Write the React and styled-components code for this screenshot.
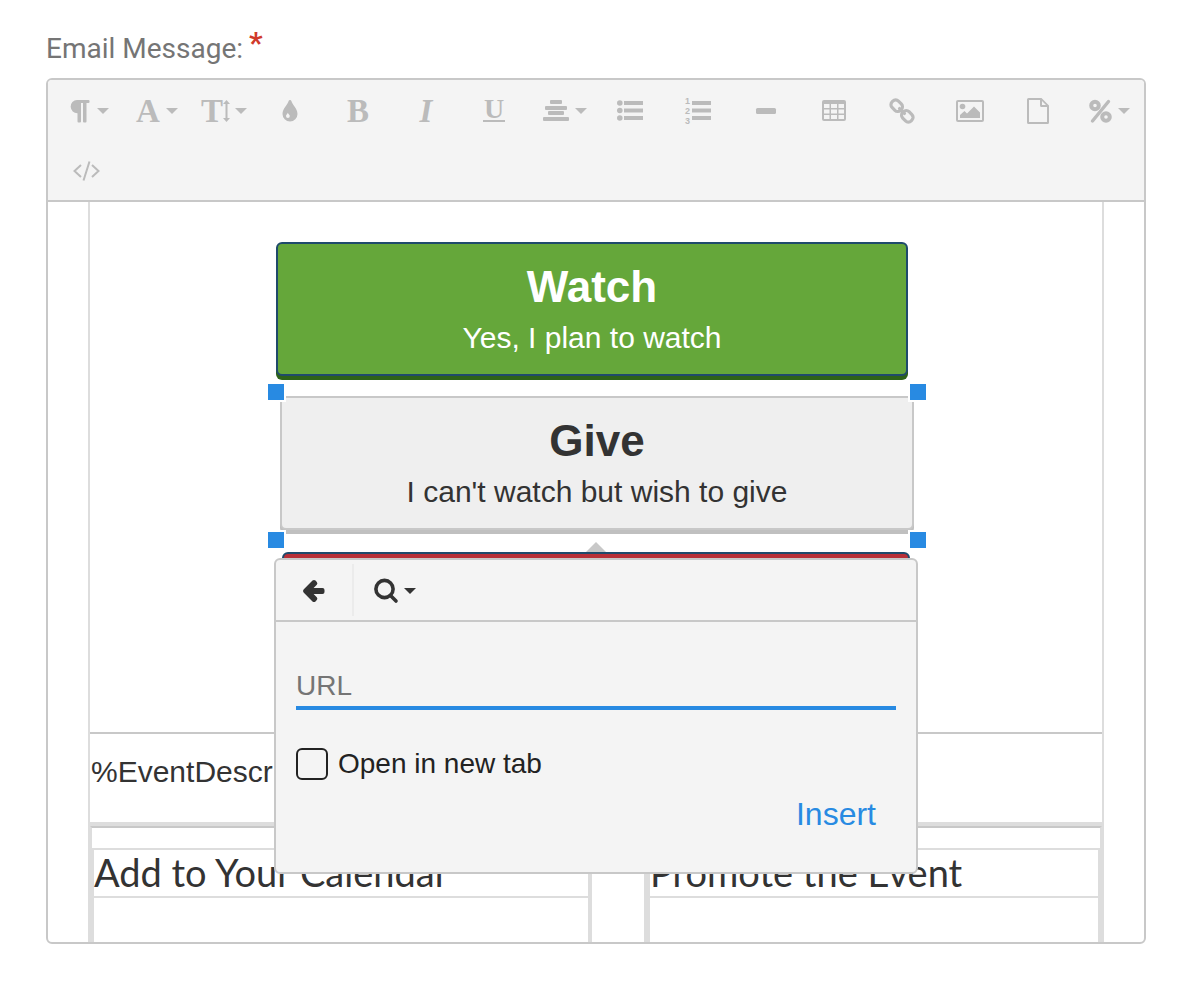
import React from "react";
import styled, { createGlobalStyle } from "styled-components";

const GlobalStyle = createGlobalStyle`
  *, *::before, *::after { box-sizing: border-box; }
  body {
    margin: 0;
    background: #fff;
    color: #333;
    font-family: "Liberation Sans", Arial, sans-serif;
  }
`;

const Field = styled.main`
  padding: 29px 40px 38px 46px;
`;

const FieldLabel = styled.h1`
  display: flex;
  gap: 6px;
  margin: 0 0 9px;
  font: 400 28px/40px Roboto, sans-serif;
  color: #757575;
`;

const Required = styled.span`
  color: #d03a2b;
  font-size: 30px;
  font-weight: 700;
  line-height: 28px;
`;

const Editor = styled.section`
  border: 2px solid #c8c8c8;
  border-radius: 6px;
  overflow: hidden;
`;

const Toolbar = styled.div`
  display: flex;
  flex-wrap: wrap;
  padding-left: 4px;
  background: #f4f4f4;
  border-bottom: 2px solid #c8c8c8;
`;

const ToolButton = styled.button`
  display: flex;
  align-items: center;
  justify-content: center;
  gap: 6px;
  width: ${(p) => p.$width || 68}px;
  height: 60px;
  padding: 2px 0 0 ${(p) => (p.$menu ? 6 : 0)}px;
  border: 0;
  background: none;
  color: ${(p) => (p.$active ? "#333" : "#bbb")};
`;

const Caret = styled.span`
  border: 6px solid transparent;
  border-top-color: currentColor;
  border-bottom: 0;
`;

const Icon = styled.svg`
  display: block;
  flex: none;
  fill: currentColor;
  overflow: visible;
`;

const Body = styled.div`
  position: relative;
  height: 740px;
  padding: 0 40px;
  overflow: hidden;
`;

const Message = styled.div`
  border: solid #ddd;
  border-width: 0 2px;
`;

const ActionCell = styled.div`
  height: 530px;
  padding-top: 40px;
`;

const ActionStack = styled.div`
  width: 640px;
  max-width: 100%;
  margin: 0 auto;
`;

const tones = {
  watch: { bg: "#65a73a", line: "#1f4a6b", edge: "#2d6218", text: "#fff", space: "0 8px 20px 0" },
  give: { bg: "#efefef", line: "#c8c8c8", edge: "#c0c0c0", text: "#333", space: "0 2px 22px 4px" },
  decline: { bg: "#b73038", line: "#1f4a6b", edge: "#7c1d23", text: "#fff", space: "0 6px" },
};

const Action = styled.a`
  position: relative;
  display: flex;
  flex-direction: column;
  justify-content: center;
  gap: 8px;
  height: 134px;
  margin: ${(p) => tones[p.$tone].space};
  border: 2px solid ${(p) => tones[p.$tone].line};
  border-radius: 6px;
  background: ${(p) => tones[p.$tone].bg};
  box-shadow: 0 4px 0 ${(p) => tones[p.$tone].edge};
  color: ${(p) => tones[p.$tone].text};
  text-align: center;
  text-decoration: none;
  font-size: 30px;
  line-height: 36px;
`;

const ActionTitle = styled.strong`
  font-size: 44px;
  line-height: 50px;
`;

const Handle = styled.i`
  position: absolute;
  ${(p) => p.$v}: ${(p) => (p.$v === "top" ? -16 : -22)}px;
  ${(p) => p.$h}: -16px;
  width: 20px;
  height: 20px;
  border: 2px solid #fff;
  background: #288ae2;
`;

const Description = styled.div`
  height: 90px;
  padding: 20px 0 0 1px;
  border-top: 2px solid #c8c8c8;
  font-size: 30px;
  line-height: 36px;
`;

const Details = styled.div`
  margin-top: 4px;
  padding-top: 20px;
  border: 2px solid #ddd;
  border-top-color: #c8c8c8;
  box-shadow: 0 -4px 0 #ddd;
`;

const Columns = styled.div`
  display: grid;
  grid-template-columns: 500fr 456fr;
  column-gap: 52px;
`;

const Column = styled.section`
  height: 140px;
  border: solid #ddd;
  border-width: 2px ${(p) => (p.$last ? 2 : 4)}px 2px ${(p) => (p.$last ? 6 : 2)}px;
`;

const ColumnTitle = styled.h2`
  height: 48px;
  margin: 0;
  border-bottom: 2px solid #ddd;
  font: 400 38px/44px Lato, sans-serif;
`;

const Popup = styled.form`
  position: absolute;
  top: 356px;
  left: 50%;
  width: 644px;
  margin-left: -322px;
  border: 2px solid #c8c8c8;
  border-radius: 6px;
  background: #f4f4f4;
  color: #222;
  font-size: 28px;

  &::before {
    content: "";
    position: absolute;
    top: -18px;
    left: 50%;
    margin-left: -10px;
    border: 10px solid transparent;
    border-top: 0;
    border-bottom-color: #c8c8c8;
  }
`;

const PopupBar = styled.div`
  display: flex;
  align-items: center;
  border-bottom: 2px solid #c8c8c8;
`;

const Divider = styled.span`
  width: 2px;
  height: 52px;
  background: #ebebeb;
`;

const PopupContent = styled.div`
  display: flex;
  flex-direction: column;
  padding: 40px 20px 38px;
`;

const UrlInput = styled.input`
  width: 100%;
  height: 48px;
  padding: 4px 0 0;
  border: 0;
  border-bottom: 4px solid #288ae2;
  border-radius: 0;
  background: transparent;
  font: inherit;
  outline: 0;

  &::placeholder { color: #757575; opacity: 1; }
`;

const CheckRow = styled.label`
  display: flex;
  align-items: center;
  gap: 10px;
  margin-top: 38px;
  line-height: 32px;
`;

const Checkbox = styled.input`
  appearance: none;
  width: 32px;
  height: 32px;
  margin: 0;
  border: 2px solid #222;
  border-radius: 6px;
`;

const InsertButton = styled.button`
  align-self: flex-end;
  margin-top: 14px;
  padding: 0 20px;
  border: 0;
  background: none;
  color: #288ae2;
  font: 32px/40px "Liberation Sans", Arial, sans-serif;
`;

const Glyph = styled.text`
  font: ${(p) => p.$font};
  text-anchor: middle;
`;

const Stroke = styled.g`
  fill: none;
  stroke: currentColor;
`;

const serif = '"Liberation Serif", serif';

const icons = {
  paragraph: (
    <Icon width="21" height="24">
      <path d="M7 1H18.5Q19.5 1 19.5 2V3Q19.5 4 18.5 4H16.5V22.5Q16.5 23.5 15.5 23.5H14Q13 23.5 13 22.5V4H11V22.5Q11 23.5 10 23.5H8.5Q7.5 23.5 7.5 22.5V14.2A6.6 6.6 0 0 1 7 1Z" />
    </Icon>
  ),
  family: <Icon width="24" height="24"><Glyph x="12" y="23" $font={`bold 33px ${serif}`}>A</Glyph></Icon>,
  size: (
    <Icon width="26" height="24">
      <Glyph x="9" y="23" $font={`bold 33px ${serif}`}>T</Glyph>
      <path d="M23.500 1L27 5H24.500V19H27L23.500 23L20 19H22.500V5H20Z" />
    </Icon>
  ),
  color: (
    <Icon width="16" height="22">
      <path fillRule="evenodd" d="M8 0C8.7 0 9.2 .4 9.4 1C10.5 5 15.5 8.500 15.500 14A7.500 7.500 0 0 1 .5 14C.5 8.500 5.500 5 6.600 1C6.800 .4 7.300 0 8 0ZM5.800 12.700C5.300 14 4 14.800 4 16.100A1.900 1.900 0 0 0 7.800 16.100C7.800 14.800 6.400 14 5.800 12.700Z" />
    </Icon>
  ),
  bold: <Icon width="22" height="24"><Glyph x="11" y="23" $font={`bold 33px ${serif}`}>B</Glyph></Icon>,
  italic: <Icon width="18" height="24"><Glyph x="9" y="23" $font={`italic bold 33px ${serif}`}>I</Glyph></Icon>,
  underline: (
    <Icon width="22" height="24">
      <Glyph x="11" y="19" $font={`bold 28px ${serif}`}>U</Glyph>
      <path d="M0 21h22v2H0Z" />
    </Icon>
  ),
  align: (
    <Icon width="26" height="22">
      <rect x="7" y="0" width="12" height="4" rx="1" />
      <rect x="2" y="6" width="22" height="4" rx="1" />
      <rect x="5" y="11" width="16" height="4" rx="1" />
      <rect x="0" y="17" width="26" height="4" rx="1" />
    </Icon>
  ),
  bullets: (
    <Icon width="26" height="22">
      {[3, 10.5, 18].map((y) => (
        <g key={y}>
          <circle cx="2.8" cy={y} r="2.8" />
          <rect x="7" y={y - 2} width="19" height="4" />
        </g>
      ))}
    </Icon>
  ),
  numbers: (
    <Icon width="26" height="22">
      {[3, 10.5, 18].map((y, i) => (
        <g key={y}>
          <Glyph x="2.5" y={4 + i * 10} $font='bold 9px "Liberation Sans", sans-serif'>{i + 1}</Glyph>
          <rect x="7" y={y - 2} width="19" height="4" />
        </g>
      ))}
    </Icon>
  ),
  rule: <Icon width="20" height="6"><rect width="20" height="6" rx="1.5" /></Icon>,
  table: (
    <Icon width="24" height="22">
      <path fillRule="evenodd" d="M2 0H22Q24 0 24 2V19Q24 21 22 21H2Q0 21 0 19V2Q0 0 2 0ZM2 4V8H7.500V4ZM9 4V8H15V4ZM16.500 4V8H22V4ZM2 9.500V13.500H7.500V9.500ZM9 9.500V13.500H15V9.500ZM16.500 9.500V13.500H22V9.500ZM2 15V19H7.500V15ZM9 15V19H15V15ZM16.500 15V19H22V15Z" />
    </Icon>
  ),
  link: (
    <Icon width="24" height="24">
      <Stroke transform="rotate(45 12 12)" strokeWidth="3.2" strokeLinecap="round">
        <rect x="-1.5" y="7.500" width="12" height="9" rx="4" />
        <rect x="13.500" y="7.500" width="12" height="9" rx="4" />
        <path d="M8.500 12H15.500" />
      </Stroke>
    </Icon>
  ),
  image: (
    <Icon width="28" height="22">
      <path fillRule="evenodd" d="M2 0H26Q28 0 28 2V20Q28 22 26 22H2Q0 22 0 20V2Q0 0 2 0ZM2 2V20H26V2Z" />
      <circle cx="6.500" cy="6.500" r="2.800" />
      <path d="M4 18V15L8.500 11L11 13.500L18 6.500L24 12.500V18Z" />
    </Icon>
  ),
  file: (
    <Icon width="22" height="26">
      <path fillRule="evenodd" d="M1.500 0H14.500L22 7.500V24.500Q22 26 20.500 26H1.500Q0 26 0 24.500V1.500Q0 0 1.500 0ZM2 2V24H20V9H14.500Q13 9 13 7.500V2ZM15 3V7H19Z" />
    </Icon>
  ),
  percent: (
    <Icon width="23" height="24">
      <Stroke>
        <circle cx="6" cy="6.500" r="3.800" strokeWidth="4" />
        <circle cx="17" cy="18" r="3.800" strokeWidth="4" />
        <path d="M19.500 2.500L3.500 22" strokeWidth="3.400" strokeLinecap="round" />
      </Stroke>
    </Icon>
  ),
  code: (
    <Icon width="27" height="20">
      <Stroke strokeWidth="2">
        <path d="M8 4L1.500 10L8 16M19 4L25.500 10L19 16M16.500 .5L10.500 19.500" />
      </Stroke>
    </Icon>
  ),
  back: (
    <Icon width="22" height="24">
      <path d="M.6 10.500L9.500 1.600Q11 .3 12.500 1.600L13.800 2.900Q15 4.300 13.800 5.700L10.600 9.100H19.500Q21.500 9.100 21.500 11V13Q21.500 14.900 19.500 14.900H10.600L13.800 18.300Q15 19.700 13.800 21.100L12.500 22.400Q11 23.700 9.500 22.400L.6 13.500Q-.6 12 .6 10.500Z" />
    </Icon>
  ),
  search: (
    <Icon width="24" height="24">
      <Stroke strokeWidth="3.6" strokeLinecap="round">
        <circle cx="10.500" cy="10" r="8.600" />
        <path d="M17 17L22 22" />
      </Stroke>
    </Icon>
  ),
};

const tools = [
  ["paragraph", "Paragraph format", true],
  ["family", "Font family", true],
  ["size", "Font size", true],
  ["color", "Colors"],
  ["bold", "Bold"],
  ["italic", "Italic"],
  ["underline", "Underline"],
  ["align", "Align", true],
  ["bullets", "Unordered list"],
  ["numbers", "Ordered list"],
  ["rule", "Horizontal line"],
  ["table", "Insert table"],
  ["link", "Insert link"],
  ["image", "Insert image"],
  ["file", "Upload file"],
  ["percent", "Merge fields", true],
  ["code", "Code view"],
];

function Tool({ icon, label, menu, ...rest }) {
  return (
    <ToolButton type="button" aria-label={label} $menu={menu} {...rest}>
      {icons[icon]}
      {menu && <Caret />}
    </ToolButton>
  );
}

export default function App() {
  return (
    <Field>
      <GlobalStyle />
      <FieldLabel>
        Email Message: <Required>*</Required>
      </FieldLabel>
      <Editor aria-label="Email message editor">
        <Toolbar role="toolbar">
          {tools.map(([icon, label, menu]) => (
            <Tool key={icon} icon={icon} label={label} menu={menu} />
          ))}
        </Toolbar>
        <Body>
          <Message>
            <ActionCell>
              <ActionStack>
                <Action href="#watch" $tone="watch">
                  <ActionTitle>Watch</ActionTitle>
                  <span>Yes, I plan to watch</span>
                </Action>
                <Action href="#give" $tone="give">
                  <ActionTitle>Give</ActionTitle>
                  <span>I can't watch but wish to give</span>
                  <Handle $v="top" $h="left" />
                  <Handle $v="top" $h="right" />
                  <Handle $v="bottom" $h="left" />
                  <Handle $v="bottom" $h="right" />
                </Action>
                <Action href="#decline" $tone="decline" aria-label="Decline" />
              </ActionStack>
            </ActionCell>
            <Description>%EventDescription%</Description>
            <Details>
              <Columns>
                <Column>
                  <ColumnTitle>Add to Your Calendar</ColumnTitle>
                </Column>
                <Column $last>
                  <ColumnTitle>Promote the Event</ColumnTitle>
                </Column>
              </Columns>
            </Details>
          </Message>
          <Popup onSubmit={(e) => e.preventDefault()}>
            <PopupBar>
              <Tool icon="back" label="Back" $width={76} $active />
              <Divider />
              <Tool icon="search" label="Choose link" menu $width={76} $active />
            </PopupBar>
            <PopupContent>
              <UrlInput type="text" placeholder="URL" aria-label="URL" />
              <CheckRow>
                <Checkbox type="checkbox" />
                Open in new tab
              </CheckRow>
              <InsertButton type="submit">Insert</InsertButton>
            </PopupContent>
          </Popup>
        </Body>
      </Editor>
    </Field>
  );
}
